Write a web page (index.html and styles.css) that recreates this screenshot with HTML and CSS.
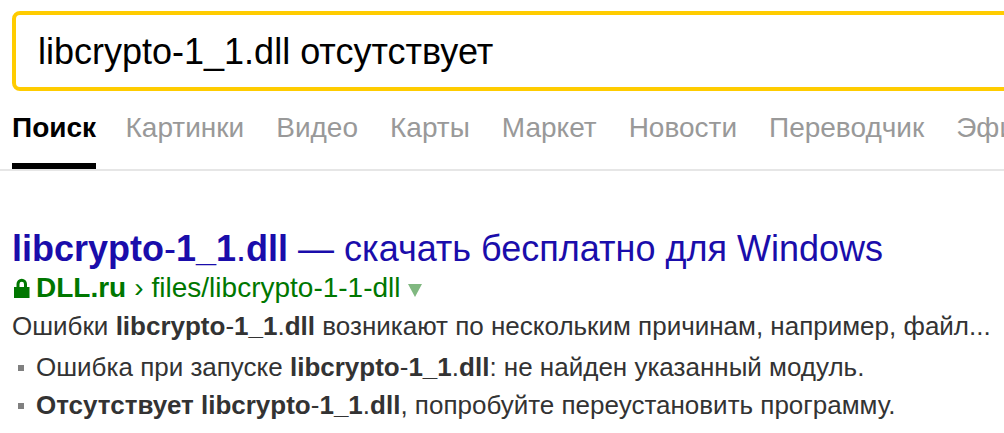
FILE: index.html
```html
<!DOCTYPE html>
<html lang="ru">
<head>
<meta charset="utf-8">
<title>libcrypto-1_1.dll отсутствует</title>
<link rel="stylesheet" href="styles.css">
</head>
<body>
<header class="head">
  <div class="search"><span class="query">libcrypto-1_1.dll отсутствует</span></div>
  <nav class="tabs">
    <a class="tab tab-active">Поиск</a>
    <a class="tab">Картинки</a>
    <a class="tab">Видео</a>
    <a class="tab">Карты</a>
    <a class="tab">Маркет</a>
    <a class="tab">Новости</a>
    <a class="tab">Переводчик</a>
    <a class="tab">Эфир</a>
  </nav>
</header>
<main class="result">
  <h2 class="title"><b>libcrypto</b>-<b>1_1</b>.<b>dll</b> — скачать бесплатно для Windows</h2>
  <div class="path">
    <svg class="lock" width="16" height="20" viewBox="0 0 16 20"><path d="M0 9h15.500v11H0zM2.500 9V6a5.250 5.250 0 0 1 10.500 0v3h-3V6a2.250 2.250 0 0 0-4.500 0v3z" fill="#070"/></svg>
    <b class="host">DLL.ru</b><span class="sep">›</span><span>files/libcrypto-1-1-dll</span><span class="arrow"></span>
  </div>
  <p class="snippet">Ошибки <b>libcrypto</b>-<b>1_1</b>.<b>dll</b> возникают по нескольким причинам, например, файл...</p>
  <ul class="list">
    <li>Ошибка при запуске <b>libcrypto</b>-<b>1_1</b>.<b>dll</b>: не найден указанный модуль.</li>
    <li><b>Отсутствует libcrypto</b>-<b>1_1</b>.<b>dll</b>, попробуйте переустановить программу.</li>
  </ul>
</main>
</body>
</html>
```
FILE: styles.css
```css
html, body { margin: 0; padding: 0; background: #fff; }
body { width: 1004px; height: 433px; overflow: hidden; font-family: "Liberation Sans", Arial, sans-serif; }
.head { padding-top: 11px; border-bottom: 2px solid #e6e6e6; height: 158px; }
.search { box-sizing: border-box; width: 1040px; height: 80px; margin-left: 12px; border: 4px solid #fc0; border-radius: 8px; padding: 2px 0 0 22px; display: flex; align-items: center; }
.query { font-size: 36px; color: #000; white-space: nowrap; }
.tabs { display: flex; gap: 32px; margin-left: 12px; margin-top: 14px; white-space: nowrap; }
.tab { box-sizing: border-box; height: 64px; padding-top: 7px; font-size: 28px; line-height: 32px; color: #999; flex: none; }
.tab-active { color: #000; font-weight: 700; border-bottom: 6px solid #000; margin-right: -2.500px; }
.result { margin: 57px 0 0 12px; white-space: nowrap; }
.title { margin: 0; font-size: 36px; font-weight: 400; line-height: 42px; color: #1a0dab; }
.path { display: flex; align-items: center; font-size: 28px; line-height: 36px; color: #070; }
.lock { margin: 0 6px 0 2px; flex: none; }
.host { font-weight: 700; }
.sep { margin: 0 8px; }
.arrow { width: 0; height: 0; margin-left: 7px; margin-top: 5px; border: 7px solid transparent; border-top: 13px solid #80b880; border-bottom: 0; }
.snippet { margin: 0; font-size: 26px; line-height: 40px; color: #333; }
.list { margin: 2px 0 0; padding: 0; list-style: none; font-size: 26px; line-height: 38px; color: #333; }
.list li { display: block; padding-left: 24px; position: relative; }
.list li::before { content: ""; position: absolute; left: 6px; top: 17px; width: 6px; height: 6px; background: #808080; }
```
